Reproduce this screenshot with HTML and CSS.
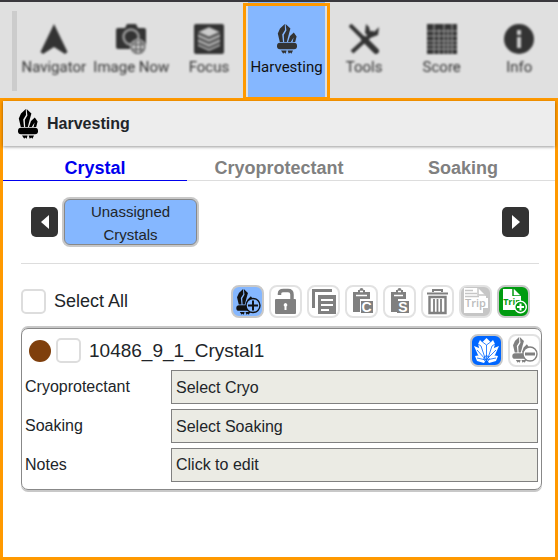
FILE: index.html
```html
<!DOCTYPE html>
<html lang="en">
<head>
    <meta charset="utf-8">
    <title>Harvesting</title>
    <meta name="viewport" content="width=device-width, initial-scale=1.0">
    <link rel="stylesheet" href="styles.css">
</head>
<body>
    <svg class="sprite" aria-hidden="true">
        <symbol id="crystal" viewBox="0 0 20 30">
            <path d="M7.800 0L3 4.500 0.800 9.500 2.800 18H6L5.200 10.500 8 6z"/>
            <path d="M8.600 0L13.400 4.500 12 9.500 9.800 18H7.200L6.800 11 9.400 6.500z"/>
            <path d="M16.800 8.500L19.600 12.500 18.200 18H15.600L16.600 13.500 13.800 18H11L13 12z"/>
            <rect x="0" y="18.700" width="20" height="6.500" rx="3"/>
            <path d="M4 26.400h5.600l-1 3.400-1.400-1.200-1 1.200zM10.600 26.400H16l-1.600 3.400-1.200-1.200-1.400 1.200z"/>
        </symbol>
    </svg>

    <nav class="toolbar">
        <a href="#" class="tool">
            <svg class="tool-icon" viewBox="0 0 30 30"><path d="M15 0L28.500 28 26 30 15 23 4 30 1.500 28z"/></svg>
            <span>Navigator</span>
        </a>
        <a href="#" class="tool">
            <svg class="tool-icon" viewBox="0 0 30 30">
                <path d="M2 4h7l2-4h9l2 4h6q2 0 2 2v17q0 2-2 2H2q-2 0-2-2V6q0-2 2-2z"/>
                <circle cx="15" cy="13" r="7.500" fill="none" stroke="#999" stroke-width="2.500"/>
                <circle cx="22" cy="23" r="8" fill="#ccc"/>
                <circle cx="22" cy="23" r="6.500" fill="none" stroke="#555" stroke-width="1.200"/>
                <path d="M16 20.500h12M16 25.500h12M20 17v12M24.500 17v12" stroke="#555" stroke-width="1.200"/>
            </svg>
            <span>Image Now</span>
        </a>
        <a href="#" class="tool">
            <svg class="tool-icon" viewBox="0 0 30 30">
                <rect width="30" height="30" rx="2"/>
                <path d="M15 3l11 5v14l-11 5-11-5V8z" fill="#aaa"/>
                <path d="M4 9l11 5 11-5M4 14l11 5 11-5M4 19l11 5 11-5" fill="none" stroke="#333" stroke-width="1.500"/>
                <path d="M15 4l9 4-9 4-9-4z" fill="#ccc"/>
            </svg>
            <span>Focus</span>
        </a>
        <a href="#" class="tool active">
            <svg class="tool-icon"><use href="#crystal"/></svg>
            <span>Harvesting</span>
        </a>
        <a href="#" class="tool">
            <svg class="tool-icon" viewBox="0 0 30 30">
                <path d="M1 1l15 15M25 8L3 28" fill="none" stroke="#333" stroke-width="4"/>
                <path d="M15 15l12 12" stroke="#333" stroke-width="6" stroke-linecap="round"/>
                <path d="M17 0l-1 9 5 5 8-3 1-8-5 5-4-1-1-4z"/>
            </svg>
            <span>Tools</span>
        </a>
        <a href="#" class="tool">
            <svg class="tool-icon" viewBox="0 0 30 30">
                <rect width="30" height="30"/>
                <path d="M0 7h30M0 12h30M0 17h30M0 21h30M0 25h30M7 0v30M12 5v25M17 0v30M21 5v25M25 0v30" stroke="#aaa" stroke-width="1"/>
            </svg>
            <span>Score</span>
        </a>
        <a href="#" class="tool">
            <svg class="tool-icon" viewBox="0 0 30 30">
                <circle cx="15" cy="15" r="15"/>
                <path d="M13 6h4v5h-4zM13 13h4v11h-4z" fill="#ccc"/>
            </svg>
            <span>Info</span>
        </a>
    </nav>

    <main class="panel">
        <header class="panel-header">
            <svg class="panel-icon"><use href="#crystal"/></svg>
            <h1>Harvesting</h1>
        </header>

        <div class="tabs">
            <button class="tab selected">Crystal</button>
            <button class="tab">Cryoprotectant</button>
            <button class="tab">Soaking</button>
        </div>

        <div class="content">
            <div class="carousel">
                <button class="arrow" aria-label="Previous"><svg viewBox="0 0 8 14"><path d="M8 0v14L0 7z"/></svg></button>
                <button class="group">Unassigned Crystals</button>
                <button class="arrow next" aria-label="Next"><svg viewBox="0 0 8 14"><path d="M0 0v14l8-7z"/></svg></button>
            </div>

            <div class="actions">
                <input type="checkbox" id="selectAll">
                <label for="selectAll">Select All</label>
                <div class="buttons">
                    <button class="icon-btn blue" aria-label="Add crystal">
                        <svg viewBox="0 0 29 29">
                            <use href="#crystal" x="3" y="2" width="18" height="26"/>
                            <circle cx="20" cy="18.500" r="7" fill="#85b7ff" stroke="#111" stroke-width="1.400"/>
                            <path d="M20 13.500v10M15 18.500h10" stroke="#111" stroke-width="2"/>
                        </svg>
                    </button>
                    <button class="icon-btn" aria-label="Unlock">
                        <svg viewBox="0 0 29 29">
                            <path d="M8.500 8V6.500q0-3 4-3h4.500q4 0 4 4V13" fill="none" stroke="#808080" stroke-width="3.500"/>
                            <rect x="4" y="12" width="21" height="15" rx="1"/>
                            <path d="M14.500 16a2 2 0 0 1 1 3.600V23h-2v-3.400a2 2 0 0 1 1-3.600z" fill="#fff"/>
                        </svg>
                    </button>
                    <button class="icon-btn" aria-label="Copy">
                        <svg viewBox="0 0 29 29">
                            <path d="M3 2h20v3H6v16H3z"/>
                            <path d="M9 8h18v19H9z"/>
                            <path d="M12 13h12M12 18h12M12 23h8" stroke="#fff" stroke-width="2"/>
                        </svg>
                    </button>
                    <button class="icon-btn" aria-label="Paste cryoprotectant">
                        <svg viewBox="0 0 29 29">
                            <path d="M6 5h5V3h1.500a2 2 0 0 1 4 0H18v2h5v7H13v13H6z"/>
                            <path d="M9 8.500h11M13 4.500h3" stroke="#fff" stroke-width="1.500"/>
                            <path d="M14 14h12v12H14z"/>
                            <text x="19.500" y="25" class="mark">C</text>
                        </svg>
                    </button>
                    <button class="icon-btn" aria-label="Paste soaking">
                        <svg viewBox="0 0 29 29">
                            <path d="M6 5h5V3h1.500a2 2 0 0 1 4 0H18v2h3v7H13v13H6z"/>
                            <path d="M9 8.500h9M13 4.500h3" stroke="#fff" stroke-width="1.500"/>
                            <path d="M12 14h12v12H12z"/>
                            <text x="18" y="25" class="mark">S</text>
                        </svg>
                    </button>
                    <button class="icon-btn" aria-label="Delete">
                        <svg viewBox="0 0 29 29">
                            <path d="M10 5V3h9v2M4 6.500h21" fill="none" stroke="#808080" stroke-width="2"/>
                            <path d="M6.500 10h16v16h-16z" fill="none" stroke="#808080" stroke-width="2.400"/>
                            <path d="M11 12v13M14.500 12v13M18 12v13" stroke="#808080" stroke-width="1.800"/>
                        </svg>
                    </button>
                    <button class="icon-btn gray" aria-label="Trip" disabled>
                        <svg viewBox="0 0 29 29">
                            <path d="M3 1h14l8 8v2H3z" fill="#fff"/>
                            <path d="M4 3.500h8M4 6.500h12M4 9.500h14" stroke="#c6c6c6" stroke-width="1.500"/>
                            <path d="M17 1v7h8" fill="none" stroke="#c6c6c6" stroke-width="1.500"/>
                            <path d="M3 11h24v10H3zM3 21h19v5H3z" fill="#fff"/>
                            <text x="14.500" y="20" class="trip">Trip</text>
                        </svg>
                    </button>
                    <button class="icon-btn green" aria-label="Add to trip">
                        <svg viewBox="0 0 29 29">
                            <path d="M4 2h11l7 7H4z" fill="#fff"/>
                            <path d="M14 2v7h8" fill="none" stroke="#009b10" stroke-width="1.500"/>
                            <path d="M4 9h18v14H4z" fill="#fff"/>
                            <text x="13" y="18" class="trip">Trip</text>
                            <circle cx="21.500" cy="20" r="5.800" fill="#009b10" stroke="#fff" stroke-width="1.400"/>
                            <path d="M21.500 16.500v7M18 20h7" stroke="#fff" stroke-width="2"/>
                        </svg>
                    </button>
                </div>
            </div>

            <section class="card">
                <div class="card-head">
                    <span class="dot"></span>
                    <input type="checkbox" id="crystal1">
                    <label for="crystal1">10486_9_1_Crystal1</label>
                    <div class="buttons">
                        <button class="icon-btn bright" aria-label="Show crystal">
                            <svg viewBox="0 0 29 29">
                                <path d="M14.500 2l4 4v9l-4 9-4-9V6zM8 4l3 3 3 16-6-8-2-7zM21 4l2 4-2 7-6 8 3-16zM2 10l5 2 7 12-8-5zM27 10l-4 9-8 5 7-12zM3 20l6-1 5 5-2 3-7-2zM26 20l-2 5-7 2-2-3 5-5z"/>
                                <path d="M10.500 6l4 3 4-3M14.500 9v14M6 8l3 2 4 12M23 8l-3 2-4 12M5 14l9 10 10-10M5 22l9 2 10-2M14.500 19l-3 4 3 4 3-4z" fill="none" stroke="#06f" stroke-width="0.800"/>
                            </svg>
                        </button>
                        <button class="icon-btn" aria-label="Remove crystal">
                            <svg viewBox="0 0 29 29">
                                <use href="#crystal" x="2" y="1" width="18" height="26"/>
                                <circle cx="20" cy="18" r="7" fill="#fff" stroke="#808080" stroke-width="1.400"/>
                                <path d="M15 18h10" stroke="#808080" stroke-width="3"/>
                            </svg>
                        </button>
                    </div>
                </div>
                <div class="field">
                    <label for="cryo">Cryoprotectant</label>
                    <select id="cryo"><option>Select Cryo</option></select>
                </div>
                <div class="field">
                    <label for="soaking">Soaking</label>
                    <select id="soaking"><option>Select Soaking</option></select>
                </div>
                <div class="field">
                    <label for="notes">Notes</label>
                    <input type="text" id="notes" value="Click to edit">
                </div>
            </section>
        </div>
    </main>
</body>
</html>
```
FILE: styles.css
```css
:root {
    --orange: #ff9900;
    --blue: #85b7ff;
    --dark: #333;
    --gray: #808080;
    --text-color: #212529;
}

* {
    box-sizing: border-box;
}

body {
    margin: 0;
    min-height: 100vh;
    display: flex;
    flex-direction: column;
    font-family: "Liberation Sans", Arial, sans-serif;
    font-size: 16px;
    color: var(--text-color);
    background-color: white;
}

button, input, select {
    font: inherit;
    color: inherit;
    margin: 0;
}

button {
    padding: 0;
    cursor: pointer;
}

.sprite {
    display: none;
}

/* top toolbar */
.toolbar {
    display: flex;
    height: 98px;
    padding-left: 15px;
    border-top: 2px solid #3a383d;
    background: linear-gradient(#ccc, #ccc) 12px 9px / 5px 80px no-repeat #e0e0e0;
}

.tool {
    flex: 1 1 0;
    min-width: 0;
    display: flex;
    flex-direction: column;
    align-items: center;
    padding-top: 22px;
    gap: 3px;
    font-family: Roboto, sans-serif;
    font-size: 15px;
    line-height: 20px;
    white-space: nowrap;
    text-decoration: none;
    color: #333;
}

.tool > * {
    filter: blur(1px);
}

.tool-icon {
    width: 30px;
    height: 30px;
    fill: var(--dark);
}

.tool.active {
    position: relative;
    background-color: var(--blue);
    color: #111;
}

.tool.active > * {
    filter: none;
}

.tool.active::after {
    content: "";
    position: absolute;
    inset: 1px -5px -2px;
    border: 3px solid var(--orange);
}

/* panel */
.panel {
    flex: 1;
    border: 3px solid var(--orange);
}

.panel-header {
    display: flex;
    align-items: center;
    gap: 9px;
    height: 45px;
    padding-left: 15px;
    background-color: #ededed;
    box-shadow: 0 1px 3px rgba(0,0,0,0.4);
}

.panel-icon {
    width: 20px;
    height: 30px;
}

h1 {
    margin: 0;
    font-size: 16px;
}

.tabs {
    display: grid;
    grid-template-columns: repeat(3, 1fr);
}

.tab {
    height: 35px;
    padding-top: 11px;
    border: none;
    border-bottom: 1px solid #ddd;
    background: none;
    font-size: 18px;
    font-weight: bold;
    color: var(--gray);
}

.tab.selected {
    color: #0000ee;
    border-color: #0000ee;
}

.content {
    padding: 16px 13px 0 18px;
}

.carousel {
    display: flex;
    align-items: center;
    gap: 4px;
    margin-right: 3px;
    padding: 0 10px 16px;
    border-bottom: 1px solid #ddd;
}

.arrow {
    width: 27px;
    height: 30px;
    border: none;
    border-radius: 5px;
    background-color: var(--dark);
}

.arrow svg {
    display: block;
    width: 8px;
    height: 14px;
    margin: 0 auto;
    fill: white;
}

.next {
    margin-left: auto;
}

.group {
    width: 133px;
    height: 46px;
    margin: 2px;
    padding: 0 20px 2px;
    border: 1px solid #888;
    border-radius: 6px;
    box-shadow: 0 0 0 2px #c8c8c8;
    background-color: var(--blue);
    font-size: 15px;
    line-height: 23px;
}

.actions {
    display: flex;
    align-items: center;
    gap: 8px;
    padding: 21px 12px 10px 0;
    font-size: 18px;
}

input[type="checkbox"] {
    appearance: none;
    width: 25px;
    height: 25px;
    border: 2px solid #ddd;
    border-radius: 5px;
    background-color: white;
}

input[type="checkbox"]:checked {
    background-color: var(--blue);
}

.buttons {
    display: flex;
    gap: 5px;
    margin-left: auto;
}

.icon-btn {
    width: 33px;
    height: 33px;
    border: 2px solid #e2e2e2;
    border-radius: 8px;
    background-color: white;
    fill: var(--gray);
}

.icon-btn svg {
    display: block;
    width: 29px;
    height: 29px;
}

.icon-btn.blue {
    border-color: #c8c8c8;
    background-color: var(--blue);
    fill: #111;
}

.icon-btn.gray {
    background-color: #c6c6c6;
}

.icon-btn.green {
    border-color: #c8c8c8;
    background-color: #009b10;
}

.icon-btn.bright {
    border-color: #c8c8c8;
    background-color: #0066ff;
    fill: white;
}

.mark {
    font-size: 14px;
    font-weight: bold;
    text-anchor: middle;
    fill: white;
}

.trip {
    font-family: "Open Sans", sans-serif;
    font-size: 11px;
    font-weight: 600;
    text-anchor: middle;
    fill: #bbb;
}

.green .trip {
    font-size: 9px;
    font-weight: bold;
    fill: #009b10;
}

/* crystal card */
.card {
    padding: 5px 3px 7px;
    border: 1px solid #888;
    border-radius: 7px;
    box-shadow: 0 2px 0 #c8c8c8, 0 -2px 0 #c8c8c8;
}

.card-head {
    display: flex;
    align-items: center;
    gap: 5px;
    margin-right: -3px;
    margin-bottom: 3px;
    padding-left: 4px;
    font-size: 19px;
}

.card-head label {
    padding-left: 3px;
}

.dot {
    width: 22px;
    height: 22px;
    border-radius: 50%;
    background-color: #7f3f0c;
}

.field {
    display: grid;
    grid-template-columns: 146px 1fr;
    align-items: center;
    margin-bottom: 5px;
}

.field:last-child {
    margin-bottom: 0;
}

.field select,
.field input {
    appearance: none;
    width: 100%;
    height: 34px;
    padding: 0 4px;
    border: 1px solid var(--gray);
    border-radius: 0;
    background-color: #ebebe4;
}
```
